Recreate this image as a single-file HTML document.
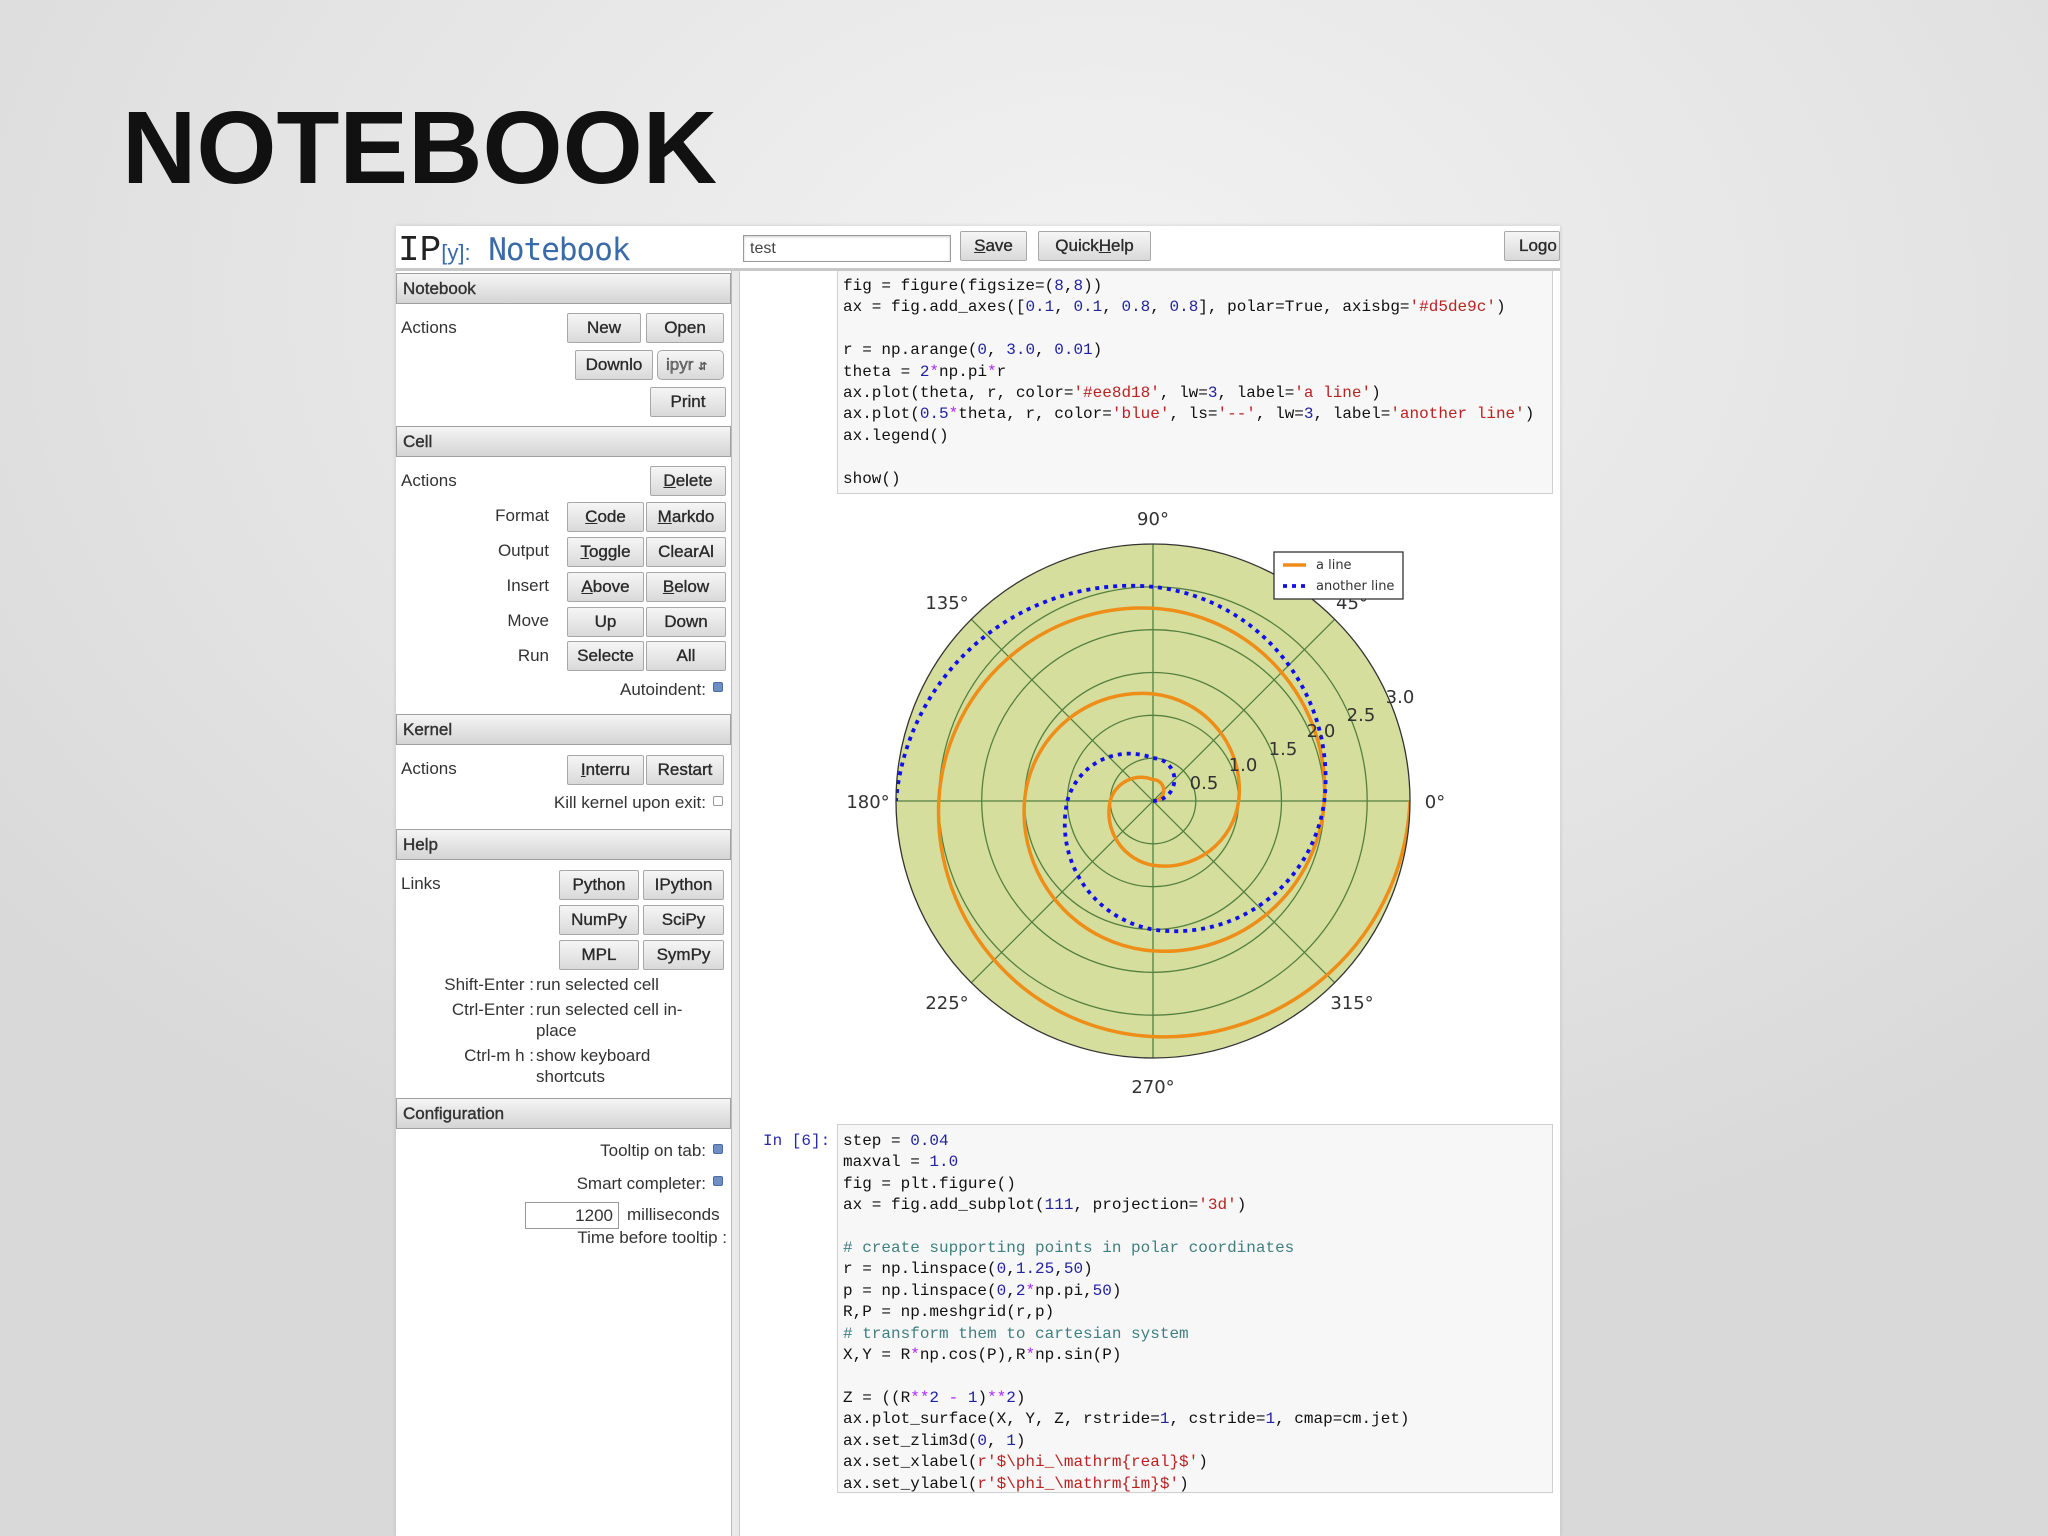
<!DOCTYPE html>
<html><head><meta charset="utf-8"><style>
*{margin:0;padding:0;box-sizing:border-box}
body{width:2048px;height:1536px;overflow:hidden;position:relative;font-family:"Liberation Sans",sans-serif;
background:radial-gradient(ellipse 1400px 1000px at 1100px 300px,#f2f2f2 0%,#e4e4e4 60%,#d9d9d9 100%);}
.a{position:absolute}
.title{left:122px;top:96px;font-size:103px;font-weight:bold;line-height:103px;color:#111;letter-spacing:0px}
.shot{left:396px;top:226px;width:1164px;height:1310px;background:#fff;box-shadow:0 0 4px rgba(0,0,0,.15)}
.b{position:absolute;background:linear-gradient(#f6f6f6,#d9d9d9);border:1px solid #a8a8a8;border-radius:2px;color:#2a2a2a;font-size:17px;text-align:center;line-height:28px;overflow:hidden;white-space:nowrap;-webkit-text-stroke:0.35px #2a2a2a}
.h{position:absolute;left:396px;width:335px;height:31px;background:linear-gradient(#f5f5f5,#d4d4d4);border:1px solid #a0a0a0;font-size:17px;line-height:29px;padding-left:6px;color:#333;-webkit-text-stroke:0.4px #333}
.l{position:absolute;font-size:17px;color:#333;line-height:22px;white-space:nowrap}
.r{text-align:right}
.cb{position:absolute;width:10px;height:10px;background:#6d8fc4;border:1px solid #4a6aa0;border-radius:2px}
pre{position:absolute;font-family:"Liberation Mono",monospace;font-size:16px;line-height:21.4px;color:#111}
.n{color:#2222a0}.s{color:#ba2121}.o{color:#aa22ff}.c{color:#408080}
</style></head><body>
<div class="a title">NOTEBOOK</div>
<div class="a shot"></div>
<!-- header -->
<div class="a" style="left:398px;top:226px;font-size:36px;line-height:44px;white-space:nowrap"><span style="font-family:'Liberation Mono',monospace;color:#222">IP</span><span style="font-family:'Liberation Sans',sans-serif;color:#3a6aa8;font-size:22px">[y]:</span><span style="font-family:'DejaVu Sans Mono',monospace;color:#3a6aa8;font-size:31px;letter-spacing:-1px">&#8201;Notebook</span></div>
<div class="a" style="left:743px;top:235px;width:208px;height:27px;border:1px solid #999;box-shadow:inset 0 1px 2px #ccc;font-size:16px;line-height:25px;padding-left:6px;color:#444">test</div>
<div class="b" style="left:960px;top:231px;width:67px;height:30px"><u>S</u>ave</div>
<div class="b" style="left:1038px;top:231px;width:113px;height:30px">Quick<u>H</u>elp</div>
<div class="b" style="left:1504px;top:231px;width:56px;height:30px;text-align:left;padding-left:14px">Logo</div>
<div class="a" style="left:396px;top:268px;width:1164px;height:3px;background:#c8c8c8"></div>
<!-- separator -->
<div class="a" style="left:731px;top:271px;width:9px;height:1265px;background:#eaeaea;border-left:1px solid #bbb;border-right:1px solid #ccc"></div>

<!-- Notebook section -->
<div class="h" style="top:273px">Notebook</div>
<div class="l" style="left:401px;top:317px">Actions</div>
<div class="b" style="left:567px;top:313px;width:74px;height:30px">New</div>
<div class="b" style="left:646px;top:313px;width:78px;height:30px">Open</div>
<div class="b" style="left:575px;top:350px;width:78px;height:30px">Downlo</div>
<div class="b" style="left:657px;top:350px;width:67px;height:30px;border-radius:5px;text-align:left;padding-left:8px;color:#777">ipyr <span style="font-size:11px">&#8693;</span></div>
<div class="b" style="left:650px;top:387px;width:76px;height:30px">Print</div>

<div class="h" style="top:426px">Cell</div>
<div class="l" style="left:401px;top:470px">Actions</div>
<div class="b" style="left:650px;top:466px;width:76px;height:30px"><u>D</u>elete</div>
<div class="l r" style="left:440px;width:109px;top:505px">Format</div>
<div class="b" style="left:567px;top:502px;width:77px;height:30px"><u>C</u>ode</div>
<div class="b" style="left:646px;top:502px;width:80px;height:30px"><u>M</u>arkdo</div>
<div class="l r" style="left:440px;width:109px;top:540px">Output</div>
<div class="b" style="left:567px;top:537px;width:77px;height:30px"><u>T</u>oggle</div>
<div class="b" style="left:646px;top:537px;width:80px;height:30px">ClearAl</div>
<div class="l r" style="left:440px;width:109px;top:575px">Insert</div>
<div class="b" style="left:567px;top:572px;width:77px;height:30px"><u>A</u>bove</div>
<div class="b" style="left:646px;top:572px;width:80px;height:30px"><u>B</u>elow</div>
<div class="l r" style="left:440px;width:109px;top:610px">Move</div>
<div class="b" style="left:567px;top:607px;width:77px;height:30px">Up</div>
<div class="b" style="left:646px;top:607px;width:80px;height:30px">Down</div>
<div class="l r" style="left:440px;width:109px;top:645px">Run</div>
<div class="b" style="left:567px;top:641px;width:77px;height:30px">Selecte</div>
<div class="b" style="left:646px;top:641px;width:80px;height:30px">All</div>
<div class="l r" style="left:560px;width:146px;top:679px">Autoindent:</div>
<div class="cb" style="left:713px;top:682px"></div>

<div class="h" style="top:714px">Kernel</div>
<div class="l" style="left:401px;top:758px">Actions</div>
<div class="b" style="left:567px;top:755px;width:77px;height:30px"><u>I</u>nterru</div>
<div class="b" style="left:646px;top:755px;width:78px;height:30px">Restart</div>
<div class="l r" style="left:500px;width:206px;top:792px">Kill kernel upon exit:</div>
<div class="a" style="left:713px;top:796px;width:10px;height:10px;border:1px solid #999;border-radius:2px"></div>

<div class="h" style="top:829px">Help</div>
<div class="l" style="left:401px;top:873px">Links</div>
<div class="b" style="left:559px;top:870px;width:80px;height:30px">Python</div>
<div class="b" style="left:643px;top:870px;width:81px;height:30px">IPython</div>
<div class="b" style="left:559px;top:905px;width:80px;height:30px">NumPy</div>
<div class="b" style="left:643px;top:905px;width:81px;height:30px">SciPy</div>
<div class="b" style="left:559px;top:940px;width:80px;height:30px">MPL</div>
<div class="b" style="left:643px;top:940px;width:81px;height:30px">SymPy</div>
<div class="l r" style="left:400px;width:134px;top:974px">Shift-Enter :</div><div class="l" style="left:536px;top:974px">run selected cell</div>
<div class="l r" style="left:400px;width:134px;top:999px">Ctrl-Enter :</div><div class="l" style="left:536px;top:999px">run selected cell in-</div>
<div class="l" style="left:536px;top:1020px">place</div>
<div class="l r" style="left:400px;width:134px;top:1045px">Ctrl-m h :</div><div class="l" style="left:536px;top:1045px">show keyboard</div>
<div class="l" style="left:536px;top:1066px">shortcuts</div>

<div class="h" style="top:1098px">Configuration</div>
<div class="l r" style="left:500px;width:206px;top:1140px">Tooltip on tab:</div>
<div class="cb" style="left:713px;top:1144px"></div>
<div class="l r" style="left:500px;width:206px;top:1173px">Smart completer:</div>
<div class="cb" style="left:713px;top:1176px"></div>
<div class="a" style="left:525px;top:1202px;width:94px;height:27px;border:1px solid #999;font-size:17px;line-height:25px;text-align:right;padding-right:5px;color:#333">1200</div>
<div class="l" style="left:627px;top:1204px">milliseconds</div>
<div class="l r" style="left:500px;width:227px;top:1227px">Time before tooltip :</div>

<!-- code cell 1 -->
<div class="a" style="left:837px;top:271px;width:716px;height:223px;background:#f7f7f7;border:1px solid #cfcfcf;border-top:none"></div>
<pre style="left:843px;top:276px">fig = figure(figsize=(<span class="n">8</span>,<span class="n">8</span>))
ax = fig.add_axes([<span class="n">0.1</span>, <span class="n">0.1</span>, <span class="n">0.8</span>, <span class="n">0.8</span>], polar=True, axisbg=<span class="s">'#d5de9c'</span>)

r = np.arange(<span class="n">0</span>, <span class="n">3.0</span>, <span class="n">0.01</span>)
theta = <span class="n">2</span><span class="o">*</span>np.pi<span class="o">*</span>r
ax.plot(theta, r, color=<span class="s">'#ee8d18'</span>, lw=<span class="n">3</span>, label=<span class="s">'a line'</span>)
ax.plot(<span class="n">0.5</span><span class="o">*</span>theta, r, color=<span class="s">'blue'</span>, ls=<span class="s">'--'</span>, lw=<span class="n">3</span>, label=<span class="s">'another line'</span>)
ax.legend()

show()</pre>

<!-- code cell 2 -->
<pre style="left:763px;top:1131px;color:#2a2aa8">In [6]:</pre>
<div class="a" style="left:837px;top:1124px;width:716px;height:369px;background:#f7f7f7;border:1px solid #cfcfcf"></div>
<pre style="left:843px;top:1131px">step = <span class="n">0.04</span>
maxval = <span class="n">1.0</span>
fig = plt.figure()
ax = fig.add_subplot(<span class="n">111</span>, projection=<span class="s">'3d'</span>)

<span class="c"># create supporting points in polar coordinates</span>
r = np.linspace(<span class="n">0</span>,<span class="n">1.25</span>,<span class="n">50</span>)
p = np.linspace(<span class="n">0</span>,<span class="n">2</span><span class="o">*</span>np.pi,<span class="n">50</span>)
R,P = np.meshgrid(r,p)
<span class="c"># transform them to cartesian system</span>
X,Y = R<span class="o">*</span>np.cos(P),R<span class="o">*</span>np.sin(P)

Z = ((R<span class="o">**</span><span class="n">2</span> <span class="o">-</span> <span class="n">1</span>)<span class="o">**</span><span class="n">2</span>)
ax.plot_surface(X, Y, Z, rstride=<span class="n">1</span>, cstride=<span class="n">1</span>, cmap=cm.jet)
ax.set_zlim3d(<span class="n">0</span>, <span class="n">1</span>)
ax.set_xlabel(<span class="s">r'$\phi_\mathrm{real}$'</span>)
ax.set_ylabel(<span class="s">r'$\phi_\mathrm{im}$'</span>)</pre>

<!-- polar plot -->
<svg class="a" style="left:0;top:0" width="2048" height="1536" viewBox="0 0 2048 1536">
<defs><clipPath id="cp"><circle cx="1153" cy="801" r="257"/></clipPath></defs>
<g transform="translate(1153,801)">
<circle r="257" fill="#d5de9c"/>
<g fill="none" stroke="#55803f" stroke-width="1.3">
<circle r="42.8"/><circle r="85.7"/><circle r="128.5"/><circle r="171.3"/><circle r="214.2"/>
<line x1="-257" y1="0" x2="257" y2="0"/><line x1="0" y1="-257" x2="0" y2="257"/>
<line x1="-181.7" y1="-181.7" x2="181.7" y2="181.7"/><line x1="-181.7" y1="181.7" x2="181.7" y2="-181.7"/>
</g>
</g>
<g clip-path="url(#cp)"><g transform="translate(1153,801)">
<path fill="none" stroke="#ee8d18" stroke-width="3.5" d="M0,0 A10.7,10.7 0 0,0 0,-21.42 A32,32 0 0,0 -42.83,0 A53.5,53.5 0 0,0 0,64.25 A75,75 0 0,0 85.67,0 A96.4,96.4 0 0,0 0,-107.08 A117.8,117.8 0 0,0 -128.5,0 A139.2,139.2 0 0,0 0,149.9 A160.6,160.6 0 0,0 171.3,0 A182,182 0 0,0 0,-192.75 A203.5,203.5 0 0,0 -214.2,0 A224.9,224.9 0 0,0 0,235.6 A246.3,246.3 0 0,0 257,0"/>
<path fill="none" stroke="#1010ee" stroke-width="3.8" stroke-dasharray="4 5" d="M0,0 A21.4,21.4 0 0,0 0,-42.83 A64.25,64.25 0 0,0 -85.67,0 A107,107 0 0,0 0,128.5 A150,150 0 0,0 171.3,0 A192.7,192.7 0 0,0 0,-214.2 A235.6,235.6 0 0,0 -257,0"/>
</g></g>
<circle cx="1153" cy="801" r="257" fill="none" stroke="#333" stroke-width="1.3"/>
<g font-family="DejaVu Sans, sans-serif" font-size="18" fill="#333" text-anchor="middle">
<text x="1153" y="525">90°</text>
<text x="1435" y="808">0°</text>
<text x="868" y="808">180°</text>
<text x="1153" y="1093">270°</text>
<text x="947" y="609">135°</text>
<text x="1352" y="609">45°</text>
<text x="947" y="1009">225°</text>
<text x="1352" y="1009">315°</text>
<text x="1204" y="789">0.5</text>
<text x="1243" y="771">1.0</text>
<text x="1283" y="755">1.5</text>
<text x="1321" y="737">2.0</text>
<text x="1361" y="721">2.5</text>
<text x="1400" y="703">3.0</text>
</g>
<rect x="1274" y="552" width="129" height="47" fill="#fff" stroke="#333" stroke-width="1.3"/>
<line x1="1283" y1="565" x2="1306" y2="565" stroke="#ee8d18" stroke-width="3.5"/>
<line x1="1283" y1="586" x2="1306" y2="586" stroke="#1010ee" stroke-width="3.8" stroke-dasharray="4 5"/>
<g font-family="DejaVu Sans, sans-serif" font-size="13" fill="#333">
<text x="1316" y="569">a line</text>
<text x="1316" y="590">another line</text>
</g>
</svg>
</body></html>
